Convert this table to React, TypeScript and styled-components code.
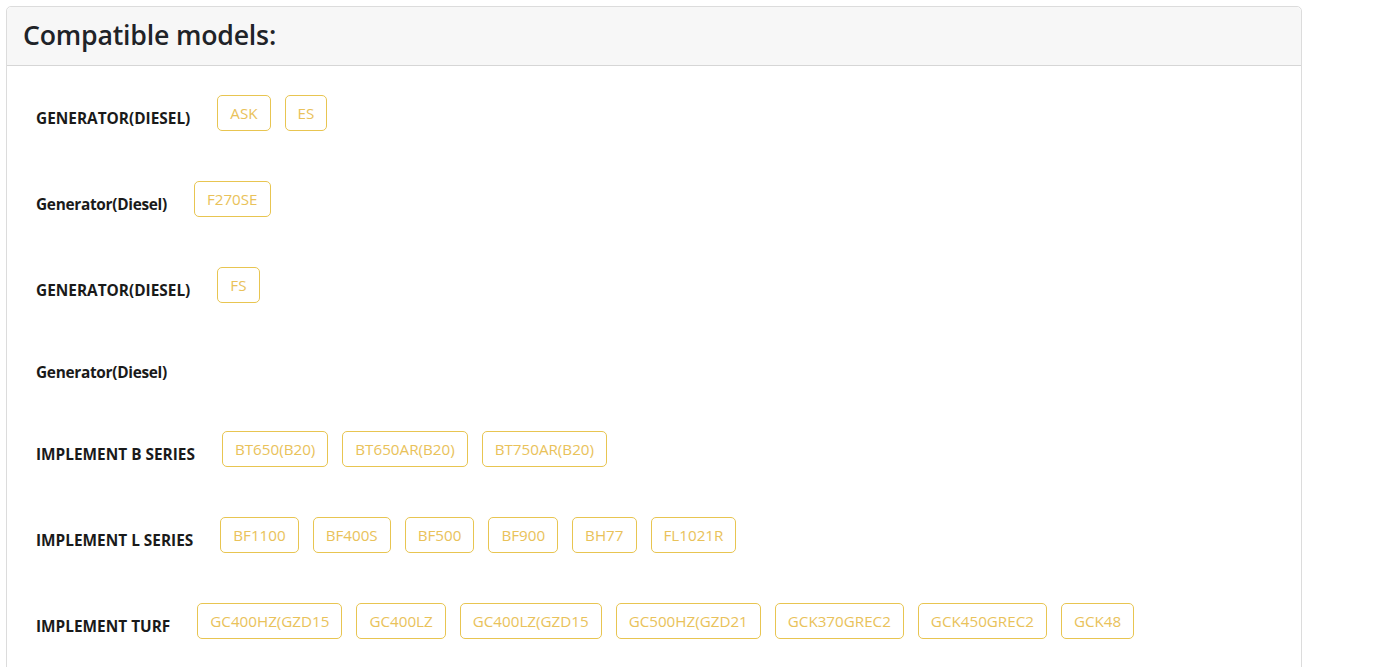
import React from "react";
import styled, { createGlobalStyle } from "styled-components";

const Global = createGlobalStyle`
  html, body { margin: 0; padding: 0; background: #fff; }
  body { font-family: "Open Sans", "Noto Sans", Arial, sans-serif; color: #212529; }
`;

const Card = styled.section`
  width: 1296px;
  margin: 6px 0 0 6px;
  box-sizing: border-box;
  border: 1px solid #dcdcdc;
  border-radius: 5px;
  background: #fff;
`;

const Header = styled.header`
  height: 59px;
  box-sizing: border-box;
  background: #f7f7f7;
  border-bottom: 1px solid #d6d6d6;
  border-radius: 5px 5px 0 0;
  display: flex;
  align-items: center;
  padding: 0 16px 4px 16px;
`;

const Title = styled.h2`
  margin: 0;
  font-size: 26.7px;
  font-weight: 600;
  color: #1f2328;
  letter-spacing: -0.2px;
`;

const Body = styled.div`
  padding: 29px 29px 80px 29px;
  display: flex;
  flex-direction: column;
  gap: 50px;
`;

const Row = styled.div`
  display: flex;
  align-items: center;
`;

const Label = styled.div<{ $lower?: boolean }>`
  padding-top: 10px;
  margin-bottom: -2px;
  line-height: 20px;
  font-size: 15.4px;
  font-weight: 700;
  color: #1a1a1a;
  margin-right: 27px;
  white-space: nowrap;
  letter-spacing: ${(p) => (p.$lower ? "-0.3px" : "0")};
`;

const Chips = styled.div`
  display: flex;
  gap: 14px;
`;

const Chip = styled.span`
  height: 36px;
  box-sizing: border-box;
  display: inline-flex;
  align-items: center;
  padding: 0 12px;
  border: 1px solid #e8c551;
  border-radius: 5px;
  color: #e9c25a;
  font-size: 15.2px;
  white-space: nowrap;
`;

const rows: { label: string; chips: string[] }[] = [
  { label: "GENERATOR(DIESEL)", chips: ["ASK", "ES"] },
  { label: "Generator(Diesel)", chips: ["F270SE"] },
  { label: "GENERATOR(DIESEL)", chips: ["FS"] },
  { label: "Generator(Diesel)", chips: [] },
  { label: "IMPLEMENT B SERIES", chips: ["BT650(B20)", "BT650AR(B20)", "BT750AR(B20)"] },
  { label: "IMPLEMENT L SERIES", chips: ["BF1100", "BF400S", "BF500", "BF900", "BH77", "FL1021R"] },
  {
    label: "IMPLEMENT TURF",
    chips: ["GC400HZ(GZD15", "GC400LZ", "GC400LZ(GZD15", "GC500HZ(GZD21", "GCK370GREC2", "GCK450GREC2", "GCK48"],
  },
];

export default function App() {
  return (
    <>
      <Global />
      <Card>
        <Header>
          <Title>Compatible models:</Title>
        </Header>
        <Body>
          {rows.map((r, i) => (
            <Row key={i}>
              <Label $lower={r.label !== r.label.toUpperCase()}>{r.label}</Label>
              {r.chips.length > 0 && (
                <Chips>
                  {r.chips.map((c) => (
                    <Chip key={c}>{c}</Chip>
                  ))}
                </Chips>
              )}
            </Row>
          ))}
        </Body>
      </Card>
    </>
  );
}
